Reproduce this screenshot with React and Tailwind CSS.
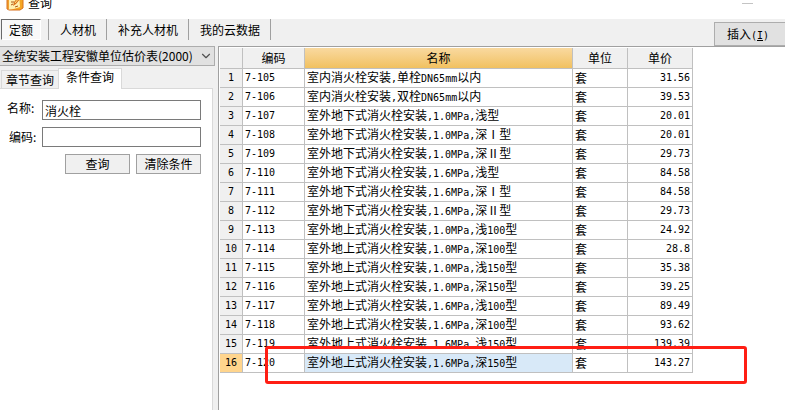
import { useState } from 'react';
import { ChevronDown } from 'lucide-react';

const MAIN_TABS = ['定额', '人材机', '补充人材机', '我的云数据'];

const ROWS = [
  { code: '7-105', name: '室内消火栓安装,单栓DN65mm以内', price: '31.56' },
  { code: '7-106', name: '室内消火栓安装,双栓DN65mm以内', price: '39.53' },
  { code: '7-107', name: '室外地下式消火栓安装,1.0MPa,浅型', price: '20.01' },
  { code: '7-108', name: '室外地下式消火栓安装,1.0MPa,深Ⅰ型', price: '20.01' },
  { code: '7-109', name: '室外地下式消火栓安装,1.0MPa,深Ⅱ型', price: '29.73' },
  { code: '7-110', name: '室外地下式消火栓安装,1.6MPa,浅型', price: '84.58' },
  { code: '7-111', name: '室外地下式消火栓安装,1.6MPa,深Ⅰ型', price: '84.58' },
  { code: '7-112', name: '室外地下式消火栓安装,1.6MPa,深Ⅱ型', price: '29.73' },
  { code: '7-113', name: '室外地上式消火栓安装,1.0MPa,浅100型', price: '24.92' },
  { code: '7-114', name: '室外地上式消火栓安装,1.0MPa,深100型', price: '28.8' },
  { code: '7-115', name: '室外地上式消火栓安装,1.0MPa,浅150型', price: '35.38' },
  { code: '7-116', name: '室外地上式消火栓安装,1.0MPa,深150型', price: '39.25' },
  { code: '7-117', name: '室外地上式消火栓安装,1.6MPa,浅100型', price: '89.49' },
  { code: '7-118', name: '室外地上式消火栓安装,1.6MPa,深100型', price: '93.62' },
  { code: '7-119', name: '室外地上式消火栓安装,1.6MPa,浅150型', price: '139.39' },
  { code: '7-120', name: '室外地上式消火栓安装,1.6MPa,深150型', price: '143.27' },
];

const MONO = "font-['DejaVu_Sans_Mono','Noto_Sans_CJK_SC',monospace] text-[10px]";

// Latin runs are set in the monospaced face, half as wide as a Chinese character
function MixedText({ text }) {
  return text.split(/([\x20-\x7e]+)/).map((part, i) =>
    i % 2 ? <span key={i} className={MONO}>{part}</span> : part
  );
}

function AppIcon() {
  return (
    <svg className="w-[18px] h-[18px] shrink-0" viewBox="0 0 18 18" aria-hidden="true">
      <path d="M1 3h3v13H1z" fill="#f0a030" />
      <path d="M3 1h11v13l-10 3-1-1z" fill="#fff0b0" />
      <path d="M13 1l4 2v12l-3 2H4l10-3z" fill="#f5a623" />
      <path d="M1 3v13l2 1h11l3-2V3" stroke="#d9711c" fill="none" />
      <path d="M5 6l3-1M5 9h3M5 12l2-1M9 14l3-1" stroke="#a9571b" fill="none" />
      <path d="M7 13l1-4 5-6 2 2-5 6z" fill="#d9711c" />
      <path d="M9 10l4-5" stroke="#ffe17d" />
    </svg>
  );
}

function TitleBar() {
  return (
    <header className="flex items-start justify-between h-[19px] pl-1.5 pr-8 bg-white">
      <div className="flex items-end gap-1 -mt-[7px]">
        <AppIcon />
        <h1 className="text-xs leading-4">查询</h1>
      </div>
      <button type="button" aria-label="最小化" className="mt-[3px] w-[11px] h-px bg-[#c4c4c4]" />
    </header>
  );
}

function Toolbar({ active, onSelect }) {
  return (
    <div className="flex items-start justify-between h-[27px] pl-px bg-[#f0f0f0]">
      <nav className="flex">
        {MAIN_TABS.map((tab) => (
          <div key={tab} className="flex h-[21px] border-r border-[#a0a0a0] first:pr-[7px]">
            <button
              type="button"
              onClick={() => onSelect(tab)}
              className={
                tab === active
                  ? 'px-[7px] bg-[#f8f8f8] border-t border-l border-t-[#696969] border-l-[#696969] border-b border-r border-b-white border-r-white'
                  : 'pl-[11px] pr-2.5'
              }
            >
              {tab}
            </button>
          </div>
        ))}
      </nav>
      <button type="button" className="mt-[3px] h-6 w-[71px] pr-1 bg-[#e1e1e1] border border-r-0 border-[#adadad]">
        插入<span className={MONO}>(<u>I</u>)</span>
      </button>
    </div>
  );
}

function QueryPanel() {
  const [name, setName] = useState('消火栓');
  const [code, setCode] = useState('');

  return (
    <aside className="flex flex-col w-[218px] shrink-0 pr-[3px] bg-[#f0f0f0]">
      <div className="relative">
        <select
          aria-label="定额库"
          className="block w-full h-5 pl-0.5 appearance-none bg-[#e1e1e1] border border-l-0 border-[#adadad]"
        >
          <option>全统安装工程安徽单位估价表(2000)</option>
        </select>
        <ChevronDown className="absolute right-0.5 top-[3px] w-3.5 h-3.5 text-[#505050] pointer-events-none" />
      </div>

      <div className="flex items-end h-[22px] pl-px pr-0.5">
        <button type="button" className="h-[18px] px-1 border border-r-0 border-b-0 border-[#d9d9d9]">章节查询</button>
        <button type="button" className="relative -mb-px h-[21px] px-[7px] pb-1 bg-white border border-b-0 border-[#d9d9d9]">
          条件查询
        </button>
      </div>

      <form
        className="flex-1 flex flex-col mr-0.5 pt-[11px] pr-[11px] pl-[7px] bg-white border-t border-r border-[#d9d9d9]"
        onSubmit={(e) => e.preventDefault()}
      >
        <div className="flex items-center">
          <label htmlFor="name" className="w-[35px] pb-1">名称:</label>
          <input
            id="name"
            value={name}
            onChange={(e) => setName(e.target.value)}
            className="flex-1 min-w-0 h-5 px-0.5 bg-white border border-[#7a7a7a] outline-none"
          />
        </div>
        <div className="flex items-center mt-[7px]">
          <label htmlFor="code" className="w-[35px] pl-0.5">编码:</label>
          <input
            id="code"
            value={code}
            onChange={(e) => setCode(e.target.value)}
            className="flex-1 min-w-0 h-5 px-0.5 bg-white border border-[#7a7a7a] outline-none"
          />
        </div>
        <div className="flex justify-end gap-1.5 mt-[7px]">
          <button type="submit" className="w-[65px] h-5 bg-[#f0f0f0] border border-[#a0a0a0]">查询</button>
          <button type="button" onClick={() => { setName(''); setCode(''); }} className="w-[65px] h-5 bg-[#f0f0f0] border border-[#a0a0a0]">
            清除条件
          </button>
        </div>
      </form>
    </aside>
  );
}

function ResultTable() {
  const [selected, setSelected] = useState('7-120');
  const th = 'p-0 font-normal border-r border-b border-[#c0c0c0]';
  const td = 'py-0 px-0.5 border-r border-b border-[#c0c0c0]';

  return (
    <table className="table-fixed w-[473px] border-separate border-spacing-0 leading-4 whitespace-nowrap">
      <colgroup>
        <col className="w-[23px]" />
        <col className="w-[62px]" />
        <col className="w-[268px]" />
        <col className="w-[55px]" />
        <col className="w-[65px]" />
      </colgroup>
      <thead className="leading-5 bg-[#f0f0f0]">
        <tr>
          <th className={th} aria-label="序号" />
          <th className={th}>编码</th>
          <th className={`${th} bg-linear-to-b from-[#f9d99f] to-[#f1c15f]`}>名称</th>
          <th className={th}>单位</th>
          <th className={th}>单价</th>
        </tr>
      </thead>
      <tbody>
        {ROWS.map((row, i) => {
          const isSelected = row.code === selected;
          return (
            <tr key={row.code} className="h-[19px]" onClick={() => setSelected(row.code)}>
              <th className={`${th} ${MONO} ${isSelected ? 'bg-[#ffd58d]' : 'bg-[#f0f0f0]'}`}>{i + 1}</th>
              <td className={`${td} ${MONO}`}>{row.code}</td>
              <td className={`${td} ${isSelected ? 'bg-[#d8e9f8]' : ''}`}><MixedText text={row.name} /></td>
              <td className={td}>套</td>
              <td className={`${td} ${MONO} text-right`}>{row.price}</td>
            </tr>
          );
        })}
      </tbody>
    </table>
  );
}

export default function App() {
  const [tab, setTab] = useState('定额');

  return (
    <div className="flex flex-col min-h-screen bg-white text-black text-xs font-['Noto_Sans_CJK_SC',sans-serif]">
      <TitleBar />
      <Toolbar active={tab} onSelect={setTab} />
      <div className="flex-1 flex">
        <QueryPanel />
        <main className="relative flex-1 min-w-0 pt-px pl-px bg-white border-t border-l border-[#a0a0a0]">
          <ResultTable />
          {/* Red marker around the last row */}
          <div className="absolute left-[46px] top-[299px] w-[482px] h-[38px] border-3 border-[#ff1e14] rounded-[3px] pointer-events-none" />
        </main>
      </div>
    </div>
  );
}
